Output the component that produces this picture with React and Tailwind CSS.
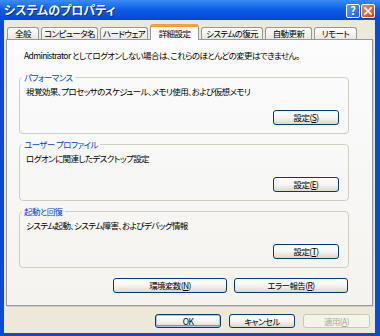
import React from "react"

const tabs = [
  { label: "全般", w: "w-[32px]" },
  { label: "コンピュータ名", w: "w-[57px]" },
  { label: "ハードウェア", w: "w-[48px]" },
  { label: "詳細設定", w: "w-[49px]", selected: true },
  { label: "システムの復元", w: "w-[62px]" },
  { label: "自動更新", w: "w-[47px]" },
  { label: "リモート", w: "w-[43px]" },
]

const groups = [
  { title: "パフォーマンス", text: "視覚効果、プロセッサのスケジュール、メモリ使用、および仮想メモリ", key: "S" },
  { title: "ユーザー プロファイル", text: "ログオンに関連したデスクトップ設定", key: "E" },
  { title: "起動と回復", text: "システム起動、システム障害、およびデバッグ情報", key: "T" },
]

const XpButton = ({ children, className = "", disabled = false, isDefault = false }) => (
  <button
    className={`flex items-center justify-center whitespace-nowrap rounded-[3px] border text-[8.5px] leading-none ${
      disabled
        ? "border-[#c9c7ba] bg-[#f5f4ea] text-[#aca899]"
        : "border-[#003c74] bg-linear-to-b from-white via-[#f6f5f0] to-[#dcd9ca] text-black"
    } ${isDefault ? "shadow-[inset_0_0_0_1px_#a9c6f0,inset_0_-1px_0_1px_#6d96d6]" : ""} ${className}`}
  >
    {children}
  </button>
)

const Tab = ({ label, w, selected }) => {
  if (selected) {
    return (
      <div
        className={`${w} relative z-10 -mb-px flex h-[16px] items-center justify-center whitespace-nowrap rounded-t-[3px] border-x border-t-[3px] border-x-[#919b9c] border-t-[#f2a03c] bg-[#fcfcfe] pb-[1px] text-[8.5px] leading-none text-black`}
      >
        {label}
      </div>
    )
  }
  return (
    <div
      className={`${w} flex h-[12px] items-center justify-center whitespace-nowrap rounded-t-[3px] border-x border-t border-[#919b9c] bg-linear-to-b from-white to-[#e8e7e0] text-[8.5px] leading-none text-black`}
    >
      {label}
    </div>
  )
}

const TitleBar = () => (
  <div className="flex h-[20px] items-center justify-between bg-linear-to-b from-[#3a8cf6] via-[#0a5ce8] to-[#0448d2] pl-[4px] pr-[5px]">
    <span className="text-[12px] font-bold leading-none tracking-normal text-white [text-shadow:1px_1px_0_#0a2c8a]">
      システムのプロパティ
    </span>
    <div className="flex gap-[1px] pt-[1px]">
      <div className="flex h-[14px] w-[14px] items-center justify-center rounded-[2px] border border-white bg-linear-to-br from-[#5f9cf7] to-[#1c5fe0] text-[11px] font-bold leading-none tracking-normal text-white">
        ?
      </div>
      <div className="flex h-[14px] w-[14px] items-center justify-center rounded-[2px] border border-white bg-linear-to-br from-[#f08a62] to-[#d8401e]">
        <svg width="8" height="8" viewBox="0 0 8 8">
          <path d="M1 1 L7 7 M7 1 L1 7" stroke="white" strokeWidth="1.8" strokeLinecap="square" />
        </svg>
      </div>
    </div>
  </div>
)

const Group = ({ title, text, hotkey }) => (
  <fieldset className="mt-[4px] w-[330px] rounded-[4px] border border-[#d0d0bf] pb-[8px] pl-[6px] pr-[9px]">
    <legend className="ml-[-4px] px-[2px] text-[8.5px] leading-[12px] text-[#0046d5]">{title}</legend>
    <div className="mt-[2px] whitespace-nowrap text-[8.5px] leading-[12px] text-black">{text}</div>
    <div className="mt-[13px] flex justify-end">
      <XpButton className="h-[15px] w-[66px]">
        設定(<u>{hotkey}</u>)
      </XpButton>
    </div>
  </fieldset>
)

export default function App() {
  return (
    <div className="flex h-[336px] w-[380px] flex-col overflow-hidden bg-[#0a4bd6] font-['Noto_Sans_CJK_JP','Noto_Sans',sans-serif] tracking-[-0.6px] [font-feature-settings:'palt']">
      <TitleBar />
      <div className="mb-[3px] ml-[4px] mr-[5px] flex flex-1 flex-col bg-[#ece9d8] px-[2px] pt-[4px]">
        <div className="flex h-[15px] items-end gap-[2px] pl-[1px]">
          {tabs.map((tab) => (
            <Tab key={tab.label} label={tab.label} w={tab.w} selected={tab.selected} />
          ))}
        </div>
        <div className="flex h-[267px] flex-col border border-[#919b9c] bg-linear-to-b from-[#fcfcfe] to-[#f4f3ee] px-[12px] pt-[9px] shadow-[1px_1px_0_#d6d2c2]">
          <p className="whitespace-nowrap pl-[5px] text-[8.5px] leading-[12px] text-black">
            Administrator としてログオンしない場合は、これらのほとんどの変更はできません。
          </p>
          <div className="mt-[6px] flex flex-col">
            {groups.map((g) => (
              <Group key={g.title} title={g.title} text={g.text} hotkey={g.key} />
            ))}
          </div>
          <div className="mt-[10px] flex w-[329px] justify-end gap-[7px]">
            <XpButton className="h-[15px] w-[114px]">
              環境変数(<u>N</u>)
            </XpButton>
            <XpButton className="h-[15px] w-[114px]">
              エラー報告(<u>R</u>)
            </XpButton>
          </div>
        </div>
        <div className="mt-[8px] flex justify-end gap-[8px] pr-[3px]">
          <XpButton isDefault className="h-[14px] w-[66px]">
            OK
          </XpButton>
          <XpButton className="h-[14px] w-[66px]">キャンセル</XpButton>
          <XpButton disabled className="h-[14px] w-[67px]">
            適用(<u>A</u>)
          </XpButton>
        </div>
      </div>
    </div>
  )
}
